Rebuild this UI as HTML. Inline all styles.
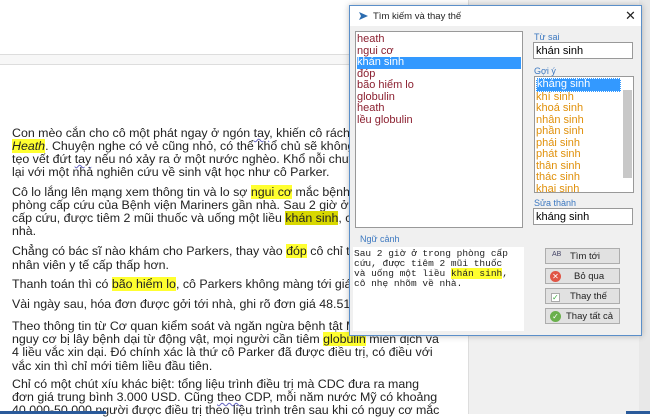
<!DOCTYPE html>
<html><head><meta charset="utf-8"><style>
*{margin:0;padding:0;box-sizing:border-box}
body{width:650px;height:414px;overflow:hidden;background:#fff;position:relative;font-family:"Liberation Sans",Arial,sans-serif}
.doc{position:absolute;left:0;top:0;width:468px;height:414px;background:#fff}
.gray{position:absolute;left:468px;top:0;width:182px;height:414px;background:#f0f0f0;border-left:1px solid #ddd}
.ln{position:absolute;left:12px;font-size:12.4px;color:#222;white-space:nowrap;line-height:14px}
.hl{background:#ffff30}
.hd{background:#d8d800}
.sq{text-decoration:underline wavy #6060c0;text-decoration-thickness:1px}
.dlg{position:absolute;left:349px;top:5px;width:293px;height:331px;background:#f0f0f0;border:1px solid #5b8fc9;box-shadow:0 0 6px rgba(0,0,0,.25)}
.title{position:absolute;left:0;top:0;width:100%;height:20px;background:#fff;font-size:9.5px;color:#222}
.a{position:absolute}
.box{position:absolute;background:#fff;border:1px solid #999}
.lst{font-size:11px;line-height:11.5px;color:#8b2030}
.sug{font-size:11px;line-height:11.5px;color:#e0900a}
.lbl{position:absolute;font-size:9px;color:#3c78c0}
.btn{position:absolute;left:195px;width:75px;height:16px;background:#e1e1e1;border:1px solid #adadad;font-size:9.5px;color:#222}
.btn span{position:absolute;top:2px}
</style></head><body>
<div class="doc">
<div class="a" style="left:0;top:54px;width:468px;height:11px;background:#f7f7f7;border-top:1px solid #ddd;border-bottom:1px solid #ddd"></div>
<div class="ln" style="top:126px">Con mèo cắn cho cô một phát ngay ở ngón <span class="sq">tay</span>, khiến cô rách da, t</div>
<div class="ln" style="top:139px"><i class="hl">Heath</i>. Chuyện nghe có vẻ cũng nhỏ, có thể khổ chủ sẽ không qua</div>
<div class="ln" style="top:152px">tẹo vết đứt <span class="sq">tay</span> nếu nó xảy ra ở một nước nghèo. Khổ nỗi chuyện x</div>
<div class="ln" style="top:165px">lại với một nhà nghiên cứu về sinh vật học như cô Parker.</div>
<div class="ln" style="top:185px">Cô lo lắng lên mạng xem thông tin và lo sợ <span class="hl">ngui cơ</span> mắc bệnh dại r</div>
<div class="ln" style="top:198px">phòng cấp cứu của Bệnh viện Mariners gần nhà. Sau 2 giờ ở trong</div>
<div class="ln" style="top:211px">cấp cứu, được tiêm 2 mũi thuốc và uống một liều <span class="hd">khán sinh</span>, có nh</div>
<div class="ln" style="top:224px">nhà.</div>
<div class="ln" style="top:244px">Chẳng có bác sĩ nào khám cho Parkers, thay vào <span class="hl">đóp</span> cô chỉ tiếp xú</div>
<div class="ln" style="top:258px">nhân viên y tế cấp thấp hơn.</div>
<div class="ln" style="top:277px">Thanh toán thì có <span class="hl">bão hiểm lo</span>, cô Parkers không màng tới giá cả.</div>
<div class="ln" style="top:297px">Vài ngày sau, hóa đơn được gởi tới nhà, ghi rõ đơn giá 48.512 USD</div>
<div class="ln" style="top:319px">Theo thông tin từ Cơ quan kiểm soát và ngăn ngừa bệnh tật Mỹ (CDC),</div>
<div class="ln" style="top:332px">nguy cơ bị lây bệnh dại từ động vật, mọi người cần tiêm <span class="hl">globulin</span> miễn dịch và</div>
<div class="ln" style="top:345px">4 liều vắc xin dại. Đó chính xác là thứ cô Parker đã được điều trị, có điều với</div>
<div class="ln" style="top:359px">vắc xin thì chỉ mới tiêm liều đầu tiên.</div>
<div class="ln" style="top:377px">Chỉ có một chút xíu khác biệt: tổng liệu trình điều trị mà CDC đưa ra mang</div>
<div class="ln" style="top:390px">đơn giá trung bình 3.000 USD. Cũng <span class="sq">theo</span> CDP, mỗi năm nước Mỹ có khoảng</div>
<div class="ln" style="top:403px">40.000-50.000 người được điều trị theo liệu trình trên sau khi có nguy cơ mắc</div>
</div>
<div class="gray"></div>
<div class="a" style="left:639px;top:0;width:11px;height:414px;background:#e8e8e8"></div>
<div class="a" style="left:0;top:411px;width:106px;height:3px;background:#2a5a9a"></div>
<div class="a" style="left:626px;top:411px;width:24px;height:3px;background:#2a5a9a"></div>
<div class="dlg">
 <div class="title">
  <svg class="a" style="left:8px;top:5px" width="11" height="10" viewBox="0 0 11 10"><path d="M1 1 L10 5 L1 9 L3 5Z" fill="#2b6cb0"/></svg>
  <span class="a" style="left:23px;top:5px">Tìm kiếm và thay thế</span>
  <span class="a" style="left:275px;top:2px;font-size:13px">✕</span>
 </div>
 <div class="box lst" style="left:5px;top:25px;width:168px;height:197px;padding:2px 1px">
  <div>heath</div><div>ngui cơ</div><div style="background:#3399ff;color:#fff">khán sinh</div><div>đóp</div><div>bão hiểm lo</div><div>globulin</div><div>heath</div><div>lều globulin</div>
 </div>
 <div class="lbl" style="left:184px;top:26px">Từ sai</div>
 <div class="box" style="left:183px;top:36px;width:100px;height:17px;font-size:11px;padding:2px 2px">khán sinh</div>
 <div class="lbl" style="left:184px;top:60px">Gợi ý</div>
 <div class="box sug" style="left:184px;top:70px;width:100px;height:117px;padding:1px 1px">
  <div style="background:#3399ff;color:#fff;width:85px;border:1px dotted #fff">kháng sinh</div><div>khí sinh</div><div>khoá sinh</div><div>nhân sinh</div><div>phần sinh</div><div>phái sinh</div><div>phát sinh</div><div>thân sinh</div><div>thác sinh</div><div>khai sinh</div>
  <div class="a" style="left:87px;top:0;width:11px;height:115px;background:#fff"></div>
  <div class="a" style="left:88px;top:13px;width:9px;height:88px;background:#c8c8c8"></div>
 </div>
 <div class="lbl" style="left:184px;top:192px">Sửa thành</div>
 <div class="box" style="left:183px;top:202px;width:100px;height:17px;font-size:11px;padding:2px 2px">kháng sinh</div>
 <div class="lbl" style="left:10px;top:228px">Ngữ cảnh</div>
 <div class="a" style="left:3px;top:241px;width:171px;height:84px;background:#fff;font-family:'Liberation Mono',monospace;font-size:9.5px;line-height:10px;color:#222;padding:2px 1px">Sau 2 giờ ở trong phòng cấp<br>cứu, được tiêm 2 mũi thuốc<br>và uống một liều <span class="hl">khán sinh</span>,<br>cô nhẹ nhõm về nhà.</div>
 <div class="btn" style="top:242px"><span style="left:6px;font-size:7px;color:#446">AB</span><span style="left:24px">Tìm tới</span></div>
 <div class="btn" style="top:262px"><span style="left:4px;top:2px;width:11px;height:11px;border-radius:50%;background:#e05545;color:#fff;font-size:8px;text-align:center;line-height:11px">✕</span><span style="left:28px">Bỏ qua</span></div>
 <div class="btn" style="top:282px"><span style="left:5px;top:4px;width:9px;height:9px;border:1px solid #aaa;background:#fff;color:#4a4;font-size:8px;line-height:8px">✓</span><span style="left:24px">Thay thế</span></div>
 <div class="btn" style="top:302px"><span style="left:4px;top:2px;width:11px;height:11px;border-radius:50%;background:#6ab04c;color:#fff;font-size:8px;text-align:center;line-height:11px">✓</span><span style="left:20px">Thay tất cả</span></div>
</div>
</body></html>
